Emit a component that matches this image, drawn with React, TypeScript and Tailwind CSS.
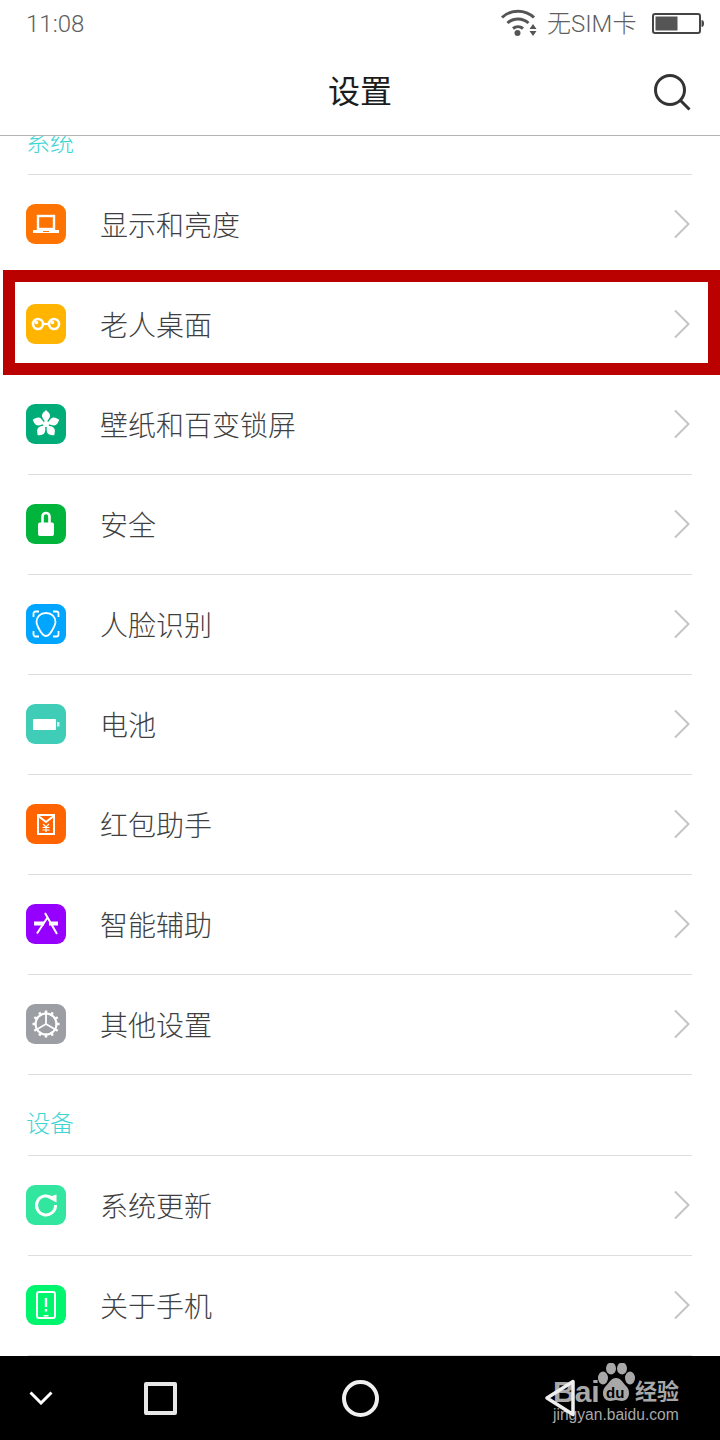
import type { ReactNode } from "react";

const cjk = "font-['Roboto','Noto_Sans_CJK_SC',sans-serif]";

function Laptop() {
  return (
    <svg width="40" height="40" viewBox="0 0 40 40" fill="none">
      <rect x="12" y="12" width="16" height="13" fill="none" stroke="#fff" strokeWidth="2.400" />
      <path d="M7 26h26v3H7z" fill="#fff" />
      <path d="M17 27h6v1h-6z" fill="#ff7300" />
    </svg>
  );
}

function Glasses() {
  return (
    <svg width="40" height="40" viewBox="0 0 40 40" fill="none">
      <circle cx="12" cy="20" r="5" stroke="#fff" strokeWidth="2.600" />
      <circle cx="28" cy="20" r="5" stroke="#fff" strokeWidth="2.600" />
      <path d="M17 20h6" stroke="#fff" strokeWidth="2.200" />
      <circle cx="10.500" cy="18.500" r="1.800" fill="#fff" />
      <circle cx="26.500" cy="18.500" r="1.800" fill="#fff" />
    </svg>
  );
}

function Flower() {
  const petals = [0, 72, 144, 216, 288];
  return (
    <svg width="40" height="40" viewBox="0 0 40 40" fill="#fff">
      {petals.map((a) => (
        <path
          key={a}
          d="M20 19c-1.500-3-4.500-5-4-8 .4-2 2.500-3.500 4-5 1.500 1.500 3.600 3 4 5 .5 3-2.500 5-4 8z"
          transform={`rotate(${a} 20 20)`}
        />
      ))}
      <circle cx="20" cy="20" r="3" />
    </svg>
  );
}

function Lock() {
  return (
    <svg width="40" height="40" viewBox="0 0 40 40" fill="none">
      <path d="M16.500 19v-6.500a3.500 3.500 0 0 1 7 0V19" stroke="#fff" strokeWidth="2.600" />
      <rect x="12" y="18.500" width="16" height="13.500" rx="2" fill="#fff" />
    </svg>
  );
}

function Face() {
  return (
    <svg width="40" height="40" viewBox="0 0 40 40" fill="none" stroke="#fff" strokeWidth="1.800">
      <path d="M7.500 13V9.500a2 2 0 0 1 2-2H13M27 7.500h3.500a2 2 0 0 1 2 2V13M32.500 27v3.500a2 2 0 0 1-2 2H27M13 32.500H9.500a2 2 0 0 1-2-2V27" />
      <path d="M20 9c-5.800 0-9.500 3.800-9.500 9 0 2 .8 3.500 1.800 5.500C14 27 16.500 32 20 32s6-5 7.700-8.500c1-2 1.800-3.500 1.800-5.500 0-5.200-3.700-9-9.500-9z" />
    </svg>
  );
}

function Battery() {
  return (
    <svg width="40" height="40" viewBox="0 0 40 40" fill="#fff">
      <rect x="7" y="15" width="23" height="11" rx="1" />
      <path d="M31 18h2.500v4.500H31z" opacity=".75" />
    </svg>
  );
}

function RedPacket() {
  return (
    <svg width="40" height="40" viewBox="0 0 40 40" fill="none" stroke="#fff">
      <rect x="12" y="11" width="16" height="19" strokeWidth="2" />
      <path d="M13 12.500l7 5.500 7-5.500" strokeWidth="2" />
      <path d="M17 20l3 3 3-3M16.500 23.500h7M16.500 26h7M20 23v5" strokeWidth="1.200" />
    </svg>
  );
}

function AppStore() {
  return (
    <svg width="40" height="40" viewBox="0 0 40 40" fill="none" stroke="#fff">
      <path d="M8 19.500h10M23 19.500h9" strokeWidth="4" />
      <path d="M19 9l12 21M21.500 13.500L11 29.500" strokeWidth="2" />
    </svg>
  );
}

function Gear() {
  const teeth = [0, 30, 60, 90, 120, 150, 180, 210, 240, 270, 300, 330];
  return (
    <svg width="40" height="40" viewBox="0 0 40 40" fill="none" stroke="#fff">
      {teeth.map((a) => (
        <path key={a} d="M20 6.500v4" strokeWidth="2.500" transform={`rotate(${a} 20 20)`} />
      ))}
      <circle cx="20" cy="20" r="10.500" strokeWidth="2" />
      <path d="M20 20V10M20 20l8.500 5M20 20l-8.500 5" strokeWidth="1.800" />
    </svg>
  );
}

function Refresh() {
  return (
    <svg width="40" height="40" viewBox="0 0 40 40" fill="none">
      <path d="M26.500 13.500A9.500 9.500 0 1 0 29.500 20" stroke="#fff" strokeWidth="3" />
      <path d="M21 12.500l9.500-3v8z" fill="#fff" />
    </svg>
  );
}

function Phone() {
  return (
    <svg width="40" height="40" viewBox="0 0 40 40" fill="none">
      <rect x="11" y="7" width="18" height="26" rx="2" stroke="#fff" strokeWidth="2" />
      <path d="M18.800 13h2.400v9h-2.400zM18.800 24h2.400v2.400h-2.400z" fill="#fff" />
      <path d="M17.500 30h5v1.500h-5z" fill="#fff" />
    </svg>
  );
}

function Chevron() {
  return (
    <svg width="18" height="30" viewBox="0 0 18 30" fill="none">
      <path d="M2 1.500L15.500 15 2 28.500" stroke="#c4c4c4" strokeWidth="2" />
    </svg>
  );
}

function Row({ icon, color, label }: { icon: ReactNode; color: string; label: string }) {
  return (
    <div className="relative flex h-[100px] items-center">
      <div className={`mb-[2px] ml-[26px] flex h-10 w-10 items-center justify-center rounded-[9px] ${color}`}>{icon}</div>
      <span className="mt-[4px] ml-[34px] flex-1 text-[28px] leading-none font-light text-[#3f3f3f]">{label}</span>
      <div className="mr-[29px] mb-[2px] flex">
        <Chevron />
      </div>
      <div className="absolute right-[28px] bottom-0 left-[28px] h-px bg-[#dedede]" />
    </div>
  );
}

function SectionLabel({ text }: { text: string }) {
  return (
    <div className="relative h-[81px]">
      <div className="pt-[33px] pl-[26px] text-[24px] leading-[32px] font-light text-[#3fd4d4]">{text}</div>
      <div className="absolute right-[28px] bottom-0 left-[28px] h-px bg-[#dedede]" />
    </div>
  );
}

export default function App() {
  return (
    <div className={`relative flex h-[1440px] w-[720px] flex-col overflow-hidden bg-white ${cjk}`}>
      {/* status bar */}
      <div className="flex h-[48px] items-center text-[24px] leading-none font-light text-[#5f5f5f]">
        <span className="ml-[26px] flex-1">11:08</span>
        <svg width="38" height="28" viewBox="0 0 38 28" fill="none" className="mr-[9px] mb-[5px]">
          <path d="M2 9.500C11 1 25 1 34 9.500M7.500 15C13.500 9.500 22.500 9.500 28.500 15M13 20.500c3-2.500 7-2.500 10 0" stroke="#555" strokeWidth="3" />
          <circle cx="17.500" cy="25" r="3" fill="#555" />
          <path d="M33 16l3.500 5h-7zM33 28l-3.500-5h7z" fill="#555" />
        </svg>
        <span className="mr-[17px] w-[88px] whitespace-nowrap">无SIM卡</span>
        <svg width="52" height="21" viewBox="0 0 52 21" fill="none" className="mr-[16px] mb-[2px]">
          <rect x="1" y="1" width="47" height="19" rx="2" stroke="#444" strokeWidth="2" />
          <rect x="3.500" y="3.500" width="22" height="14" fill="#555" />
          <path d="M49.500 7c1.500 0 2.500 1 2.500 3.500s-1 3.500-2.500 3.500z" fill="#444" />
        </svg>
      </div>

      {/* title bar */}
      <div className="relative z-10 flex h-[88px] items-center justify-center border-b border-[#b4b4b4] bg-white">
        <span className="mt-[1px] text-[32px] leading-none text-[#1c1c1c]">设置</span>
        <svg width="40" height="38" viewBox="0 0 40 38" fill="none" className="absolute top-[25px] right-[27px]">
          <circle cx="17" cy="17" r="14.500" stroke="#333" strokeWidth="3" />
          <path d="M27.500 27.500l9 9" stroke="#333" strokeWidth="3" />
        </svg>
      </div>

      {/* list, scrolled a little */}
      <div className="flex-1 overflow-hidden">
        <div className="mt-[-42px]">
          <SectionLabel text="系统" />
          <Row icon={<Laptop />} color="bg-[#ff7300]" label="显示和亮度" />
          <Row icon={<Glasses />} color="bg-[#ffb400]" label="老人桌面" />
          <Row icon={<Flower />} color="bg-[#00ad78]" label="壁纸和百变锁屏" />
          <Row icon={<Lock />} color="bg-[#00b43c]" label="安全" />
          <Row icon={<Face />} color="bg-[#00a5ff]" label="人脸识别" />
          <Row icon={<Battery />} color="bg-[#3fcdb7]" label="电池" />
          <Row icon={<RedPacket />} color="bg-[#ff6400]" label="红包助手" />
          <Row icon={<AppStore />} color="bg-[#9600ff]" label="智能辅助" />
          <Row icon={<Gear />} color="bg-[#9b9ea3]" label="其他设置" />
          <SectionLabel text="设备" />
          <Row icon={<Refresh />} color="bg-[#32e6a0]" label="系统更新" />
          <Row icon={<Phone />} color="bg-[#00f56e]" label="关于手机" />
        </div>
      </div>

      {/* nav bar */}
      <div className="relative flex h-[84px] items-center bg-black">
        <svg width="24" height="14" viewBox="0 0 24 14" fill="none" className="ml-[29px]">
          <path d="M1.500 1.500L12 12 22.500 1.500" stroke="#fff" strokeWidth="3" />
        </svg>
        <div className="ml-[91px] h-[33px] w-[33px] rounded-[2px] border-[4px] border-[#e8e8e8]" />
        <div className="ml-[165px] h-[37px] w-[37px] rounded-full border-[4px] border-[#f0f0f0]" />
      </div>

      {/* baidu watermark */}
      <div className="absolute top-[1363px] left-[553px] h-[60px] w-[130px] text-[#a8a8a8]">
        <span className="absolute top-[14px] left-0 font-['Liberation_Sans',sans-serif] text-[30px] leading-[30px] font-bold">Bai</span>
        <svg width="38" height="42" viewBox="0 0 38 42" className="absolute top-0 left-[44px]" fill="#a8a8a8">
          <ellipse cx="6" cy="15" rx="5" ry="6.500" />
          <ellipse cx="14" cy="5.500" rx="5" ry="6" />
          <ellipse cx="25" cy="5.500" rx="5" ry="6" />
          <ellipse cx="33" cy="15" rx="5" ry="6.500" />
          <path d="M19 15c5 0 7 5 11 9 4 5 2 14-5 14-3 0-4-1-6-1s-3 1-6 1c-7 0-9-9-5-14 4-4 6-9 11-9z" />
        </svg>
        <span className="absolute top-[22px] left-[53px] font-['Liberation_Sans',sans-serif] text-[15px] leading-[16px] font-bold text-black">du</span>
        <span className="absolute top-[17px] left-[82px] text-[22px] leading-[24px] font-bold">经验</span>
        <span className="absolute top-[43px] left-0 font-['Liberation_Sans',sans-serif] text-[15.6px] leading-[18px] whitespace-nowrap">jingyan.baidu.com</span>
      </div>
      <svg width="32" height="38" viewBox="0 0 32 38" fill="none" className="absolute top-[1379px] left-[544px]">
        <path d="M29 2.500L3 19l26 16.500z" stroke="#eeeeee" strokeWidth="3.500" strokeLinejoin="round" />
      </svg>

      {/* highlight frame */}
      <div className="absolute top-[270px] left-[3px] h-[105px] w-[717px] border-[12px] border-[#bb0000]" />
    </div>
  );
}
